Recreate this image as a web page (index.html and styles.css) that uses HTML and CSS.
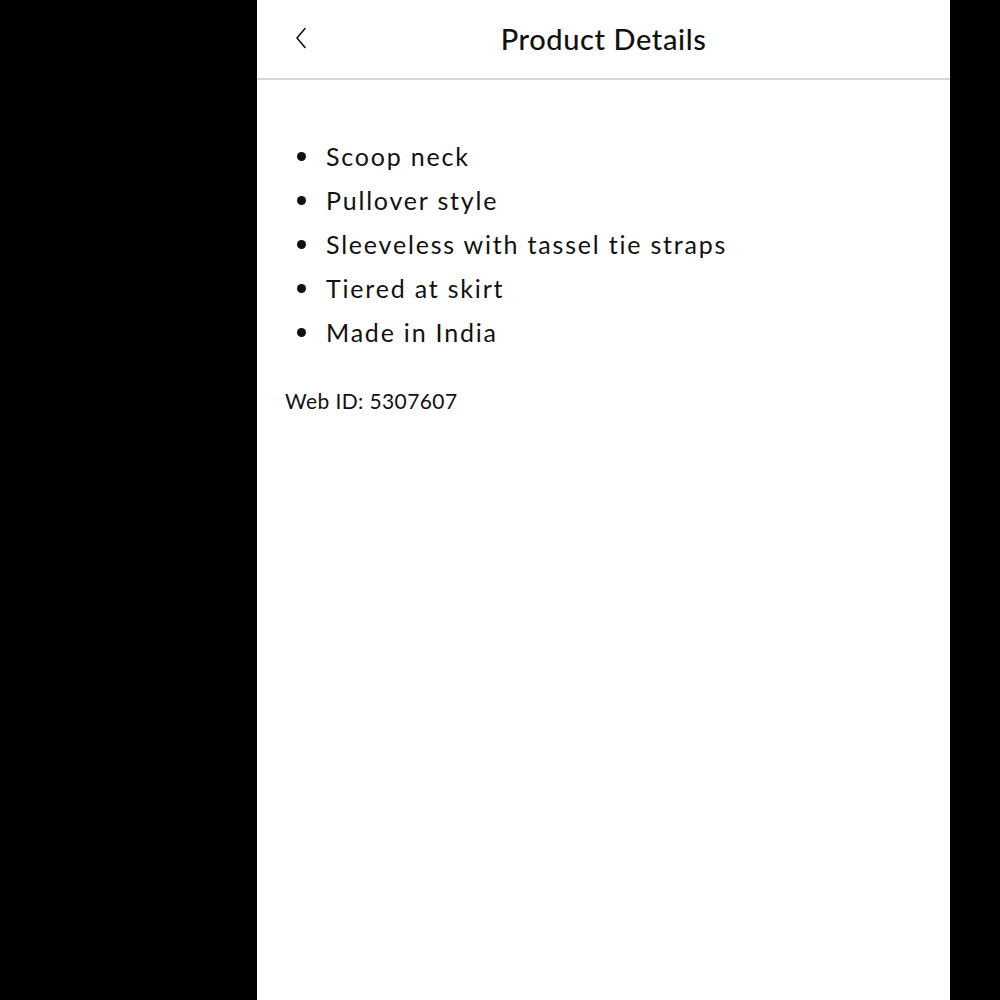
FILE: index.html
```html
<!DOCTYPE html>
<html>
<head>
<meta charset="utf-8">
<link rel="stylesheet" href="styles.css">
</head>
<body>
<div class="screen">
  <div class="side"></div>
  <main class="panel">
    <header class="bar">
      <button class="back" aria-label="Back">
        <svg width="12" height="22" viewBox="0 0 12 22"><path d="M10 1.5 L2 11 L10 20.5" fill="none" stroke="#111" stroke-width="1.6" stroke-linecap="round" stroke-linejoin="round"/></svg>
      </button>
      <h1 class="title">Product Details</h1>
      <div class="spacer"></div>
    </header>
    <section class="content">
      <ul class="features">
        <li>Scoop neck</li>
        <li>Pullover style</li>
        <li>Sleeveless with tassel tie straps</li>
        <li>Tiered at skirt</li>
        <li>Made in India</li>
      </ul>
      <p class="webid">Web ID: 5307607</p>
    </section>
  </main>
</div>
</body>
</html>
```

FILE: styles.css
```css
html, body {
  margin: 0;
  padding: 0;
  background: #000;
}
.screen {
  display: flex;
  width: 1000px;
  height: 1000px;
}
.side {
  width: 257px;
  flex: none;
}
.panel {
  width: 693px;
  flex: none;
  height: 1000px;
  background: #fff;
  font-family: Lato, "Noto Sans", sans-serif;
  color: #111;
}
.bar {
  height: 78px;
  border-bottom: 2px solid #d6d6d6;
  display: grid;
  grid-template-columns: 1fr auto 1fr;
  align-items: center;
}
.back {
  justify-self: start;
  background: none;
  border: 0;
  padding: 0 0 2px 38px;
  display: flex;
  align-items: center;
  cursor: pointer;
}
.title {
  margin: 0;
  font-size: 29px;
  font-weight: 500;
  letter-spacing: 0.6px;
  padding-bottom: 2px;
}
.content {
  padding: 54px 28px 0 28px;
}
.features {
  margin: 0;
  padding: 0 0 0 41px;
  list-style: none;
}
.features li {
  position: relative;
  font-size: 25px;
  line-height: 44px;
  letter-spacing: 1.8px;
}
.features li::before {
  content: "";
  position: absolute;
  left: -29px;
  top: 18px;
  width: 9px;
  height: 9px;
  border-radius: 50%;
  background: #111;
}
.webid {
  margin: 33px 0 0 0;
  font-size: 21px;
  line-height: 28px;
  letter-spacing: 0.4px;
}
```
